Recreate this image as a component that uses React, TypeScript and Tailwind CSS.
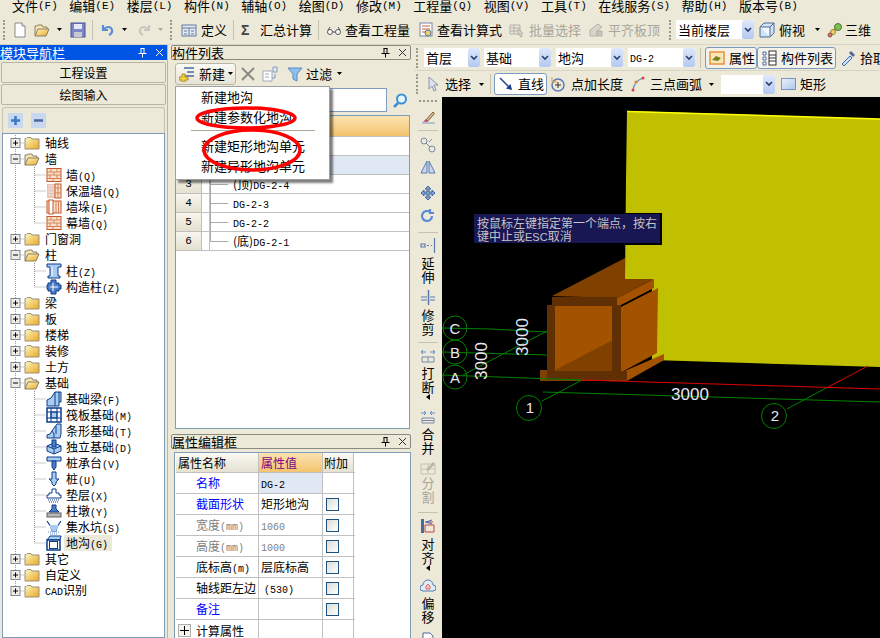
import { FC, ReactNode } from "react";

const L: FC<{ children: ReactNode }> = ({ children }) => (
  <span className="font-['Liberation_Mono',monospace] text-[10px]">{children}</span>
);

const Grip = () => <div className="w-0 h-[20px] border-l-2 border-dotted border-[#9a9a88] shrink-0" />;
const Sep = () => <div className="w-px h-[20px] bg-[#c5c2b0] shrink-0" />;
const Arrow: FC<{ gray?: boolean }> = ({ gray }) => (
  <svg width="5" height="3" viewBox="0 0 5 3" className="shrink-0">
    <path d="M0 0h5L2.500 3z" fill={gray ? "#aaa" : "#000"} />
  </svg>
);

const Folder: FC<{ open?: boolean }> = ({ open }) => (
  <svg width="16" height="14" viewBox="0 0 16 14" className="shrink-0">
    <defs>
      <linearGradient id="fold" x1="0" y1="0" x2="1" y2="1">
        <stop offset="0" stopColor="#fff6c8" />
        <stop offset="1" stopColor="#e8a820" />
      </linearGradient>
    </defs>
    {open ? (
      <>
        <path d="M1 13V3h2l1-1h4l1 2h4v2" fill="#f5e4b0" stroke="#8a8068" />
        <path d="M1 13l3-7h11l-3 7z" fill="url(#fold)" stroke="#8a8068" />
      </>
    ) : (
      <path d="M1 13V2.500h1l1-1h4l1 1.500h7v10z" fill="url(#fold)" stroke="#9a9078" />
    )}
  </svg>
);

const Bricks = () => (
  <>
    <rect x="1" y="1.500" width="14" height="13" fill="#f8e2cc" stroke="#c4562a" />
    <path d="M1 5h14M1 8h14M1 11.500h14M5 1.500V5M11 1.500V5M8 5v3M4 8v3.500M11 8v3.500M7 11.500v3" stroke="#d8805a" fill="none" />
  </>
);

const B = { fill: "#a8cdf0", stroke: "#0c3c8c" };

const icons: Record<string, ReactNode> = {
  wall: <Bricks />,
  insul: (
    <>
      <rect x="1" y="1" width="8" height="14" fill="#e8c4b8" />
      <path d="M2 3h6M2 6h6M2 9h6M2 12h6" stroke="#f4e4dc" />
      <rect x="9" y="1" width="6" height="14" fill="#f8e2cc" stroke="#c4562a" />
      <path d="M12 1v14M9 5h6M9 10h6" stroke="#d8805a" />
    </>
  ),
  pier: (
    <>
      <rect x="1" y="2" width="14" height="12" fill="#f8e2cc" stroke="#c4562a" />
      <rect x="3" y="1" width="4" height="14" fill="#fff" stroke="#c4562a" />
      <path d="M10 2v12M12.500 2v12" stroke="#d8805a" />
    </>
  ),
  col: (
    <>
      <path d="M1 1h14v3h-3v9h2v2H2v-2h2V4H1z" {...B} />
      <path d="M6 4v9" stroke="#fff" />
    </>
  ),
  gz: (
    <>
      <path d="M5 1h5v3h3v2h2v4h-2v2h-3v3H5v-3H2v-2H1V6h1V4h3z" fill="#4a7cc8" stroke="#0c3c8c" />
      <path d="M7 4v8M4 8h8" stroke="#fff" />
    </>
  ),
  jcl: <path d="M1 15V9l4-2 4-6h6v10h-2v4zM9 1v14M13 1v10" {...B} />,
  fb: (
    <>
      <rect x="1" y="1" width="14" height="14" fill="#fff" stroke="#0c3c8c" strokeWidth="1.500" />
      <rect x="5" y="5" width="6" height="6" fill="#a8cdf0" stroke="#0c3c8c" />
      <path d="M5 1v14M11 1v14M1 5h14M1 11h14" stroke="#0c3c8c" />
    </>
  ),
  tx: <path d="M1 15v-3l3-1 4-6 3-4h4v10l-1 4zM6 8l2 3v4M10 3v8" {...B} />,
  dl: (
    <>
      <path d="M1 7l7-3 7 3v5l-7 3-7-3z" {...B} />
      <path d="M1 7l7 3 7-3M8 10v5" fill="none" stroke="#0c3c8c" />
      <rect x="6" y="1" width="4" height="7" fill="#4a7cc8" stroke="#0c3c8c" />
    </>
  ),
  cap: (
    <>
      <path d="M1 2h14v4H1z" {...B} />
      <path d="M6 6h4v6l-2 3-2-3z" fill="#4a7cc8" stroke="#0c3c8c" />
    </>
  ),
  pile: <path d="M6 1h4v7h3l-3 3v2l-2 2-2-2v-2L3 8h3z" {...B} />,
  pad: (
    <>
      <path d="M6 2h4v4h3v2h2v3H1V8h2V6h3z" fill="#fff" stroke="#0c3c8c" />
      <path d="M2 13h12M3 15h10" stroke="#0c3c8c" strokeDasharray="1 1" />
    </>
  ),
  zd: (
    <>
      <path d="M6 2h4v4l3 3H3l3-3z" fill="#4a7cc8" stroke="#0c3c8c" />
      <rect x="1" y="10" width="14" height="4" fill="#b8b8b8" stroke="#606060" />
    </>
  ),
  pit: (
    <>
      <path d="M1 2l4 6h6l4-6M5 8l1 4h4l1-4" fill="none" stroke="#0c3c8c" strokeWidth="1.200" />
      <path d="M3 6h10l-3 6H6z" fill="#a8cdf0" />
      <path d="M2 13h12M4 15h8" stroke="#6a9ad0" strokeDasharray="1 1" />
    </>
  ),
  dg: (
    <>
      <path d="M1 5l3-4h11l-1 4z" {...B} />
      <path d="M1 5h13v10H1z" fill="#fff" stroke="#0c3c8c" strokeWidth="1.500" />
      <rect x="3.500" y="6.500" width="8" height="7" fill="#fff" stroke="#0c3c8c" />
    </>
  ),
};

const Ico: FC<{ name: string }> = ({ name }) => (
  <svg width="16" height="16" viewBox="0 0 16 16" className="shrink-0">
    {icons[name]}
  </svg>
);

type TreeRow = { label: string; key?: string; kind: "closed" | "open" | "child"; icon?: string; last?: boolean; end?: boolean; sel?: boolean };

const tree: TreeRow[] = [
  { label: "轴线", kind: "closed" },
  { label: "墙", kind: "open" },
  { label: "墙", key: "(Q)", kind: "child", icon: "wall" },
  { label: "保温墙", key: "(Q)", kind: "child", icon: "insul" },
  { label: "墙垛", key: "(E)", kind: "child", icon: "pier" },
  { label: "幕墙", key: "(Q)", kind: "child", icon: "wall", last: true },
  { label: "门窗洞", kind: "closed" },
  { label: "柱", kind: "open" },
  { label: "柱", key: "(Z)", kind: "child", icon: "col" },
  { label: "构造柱", key: "(Z)", kind: "child", icon: "gz", last: true },
  { label: "梁", kind: "closed" },
  { label: "板", kind: "closed" },
  { label: "楼梯", kind: "closed" },
  { label: "装修", kind: "closed" },
  { label: "土方", kind: "closed" },
  { label: "基础", kind: "open" },
  { label: "基础梁", key: "(F)", kind: "child", icon: "jcl" },
  { label: "筏板基础", key: "(M)", kind: "child", icon: "fb" },
  { label: "条形基础", key: "(T)", kind: "child", icon: "tx" },
  { label: "独立基础", key: "(D)", kind: "child", icon: "dl" },
  { label: "桩承台", key: "(V)", kind: "child", icon: "cap" },
  { label: "桩", key: "(U)", kind: "child", icon: "pile" },
  { label: "垫层", key: "(X)", kind: "child", icon: "pad" },
  { label: "柱墩", key: "(Y)", kind: "child", icon: "zd" },
  { label: "集水坑", key: "(S)", kind: "child", icon: "pit" },
  { label: "地沟", key: "(G)", kind: "child", icon: "dg", last: true, sel: true },
  { label: "其它", kind: "closed" },
  { label: "自定义", kind: "closed" },
  { label: "CAD识别", kind: "closed", end: true },
];

const Expander: FC<{ open: boolean; end?: boolean }> = ({ open, end }) => (
  <svg width="24" height="16" viewBox="0 0 24 16" className="shrink-0">
    <path d={end ? "M15.500 0V8M15.500 8H24" : "M15.500 0V16M15.500 8H24"} stroke="#999" strokeDasharray="1 1" fill="none" />
    <rect x="11" y="3.500" width="9" height="9" fill="#f0eee4" stroke="#7f8a98" />
    <path d={open ? "M13 8h5" : "M13 8h5M15.500 5.500v5"} stroke="#000" />
  </svg>
);

const ChildGuide: FC<{ last?: boolean }> = ({ last }) => (
  <svg width="46" height="16" viewBox="0 0 46 16" className="shrink-0">
    <path d="M15.500 0V16" stroke="#999" strokeDasharray="1 1" />
    <path d={last ? "M34.500 0V8H46" : "M34.500 0V16M34.500 8H46"} stroke="#999" strokeDasharray="1 1" fill="none" />
  </svg>
);

const Tree = () => (
  <div className="flex-1 bg-white border border-[#7f9db9] pt-[1px] text-[12px] leading-[16px] overflow-hidden">
    {tree.map((r, i) => (
      <div key={i} className="flex items-center h-[16px] -ml-[3px]">
        {r.kind === "child" ? (
          <>
            <ChildGuide last={r.last} />
            <Ico name={r.icon!} />
            <span className={`ml-[2px] pl-[2px] pr-[4px] h-[16px] ${r.sel ? "bg-[#ece9d8]" : ""}`}>
              {r.label}
              <L>{r.key}</L>
            </span>
          </>
        ) : (
          <>
            <Expander open={r.kind === "open"} end={r.end} />
            <Folder open={r.kind === "open"} />
            <span className="ml-[5px]">
              {r.label === "CAD识别" ? (
                <>
                  <L>CAD</L>识别
                </>
              ) : (
                r.label
              )}
            </span>
          </>
        )}
      </div>
    ))}
  </div>
);

const PinClose: FC<{ white?: boolean }> = ({ white }) => {
  const c = white ? "#fff" : "#000";
  return (
    <div className="ml-auto flex items-center gap-[8px] pr-[3px]">
      <svg width="9" height="10" viewBox="0 0 9 10">
        <path d="M2.500 0.500h4M3 0.500v5M6 0.500v5M0.500 5.500h8M4.500 5.500v4" stroke={c} fill="none" />
      </svg>
      <svg width="9" height="9" viewBox="0 0 9 9">
        <path d="M1 1l7 7M8 1l-7 7" stroke={white ? "#fff" : "#333"} fill="none" />
      </svg>
    </div>
  );
};

const Combo: FC<{ w: string; children?: ReactNode }> = ({ w, children }) => (
  <div className={`${w} h-[19px] bg-white flex items-center pl-[2px] text-[13px] leading-[19px] shrink-0`}>
    <span className="truncate">{children}</span>
    <div className="ml-auto w-[12px] h-[19px] bg-gradient-to-b from-[#dfe8fb] to-[#b4c8f0] flex items-center justify-center rounded-[2px] shrink-0">
      <svg width="8" height="6" viewBox="0 0 8 6">
        <path d="M1 1l3 3 3-3" stroke="#27406e" strokeWidth="1.600" fill="none" />
      </svg>
    </div>
  </div>
);

const Menu = () => (
  <div className="h-[15px] flex items-start pl-[12px] gap-[11.500px] text-[13px] leading-[12px] overflow-hidden shrink-0">
    {[
      ["文件", "(F)"],
      ["编辑", "(E)"],
      ["楼层", "(L)"],
      ["构件", "(N)"],
      ["辅轴", "(O)"],
      ["绘图", "(D)"],
      ["修改", "(M)"],
      ["工程量", "(Q)"],
      ["视图", "(V)"],
      ["工具", "(T)"],
      ["在线服务", "(S)"],
      ["帮助", "(H)"],
      ["版本号", "(B)"],
    ].map(([a, b]) => (
      <div key={a} className="flex whitespace-nowrap">
        <div>{a}</div>
        <div className="font-['Liberation_Mono',monospace] text-[11px]">{b}</div>
      </div>
    ))}
  </div>
);

const Svg16: FC<{ children: ReactNode }> = ({ children }) => (
  <svg width="16" height="16" viewBox="0 0 16 16" className="shrink-0">
    {children}
  </svg>
);

const TopBar = () => (
  <div className="h-[30px] flex items-center pl-[3px] text-[13px] leading-[16px] border-b border-[#d8d5c4] whitespace-nowrap overflow-hidden shrink-0">
    <Grip />
    <div className="ml-[7px]">
      <Svg16>
        <path d="M3 1h7l3 3v11H3z" fill="#fff" stroke="#8a8a8a" />
        <path d="M10 1v3h3" fill="#eee" stroke="#8a8a8a" />
      </Svg16>
    </div>
    <div className="ml-[6px]">
      <Folder open />
    </div>
    <div className="ml-[7px]"><Arrow /></div>
    <div className="ml-[8px]">
      <Svg16>
        <rect x="1" y="1" width="14" height="14" fill="#7a86c8" stroke="#4a5098" />
        <rect x="4" y="2" width="8" height="5" fill="#e8e8f4" />
        <rect x="4" y="10" width="8" height="5" fill="#c8c8d0" />
      </Svg16>
    </div>
    <div className="ml-[6px]"><Sep /></div>
    <div className="ml-[7px]">
      <Svg16>
        <path d="M3 3v5h5M3.500 8C6 4 11 4 12 8c.5 2-1 4-3 5" stroke="#5a8ad8" strokeWidth="2.200" fill="none" />
      </Svg16>
    </div>
    <div className="ml-[6px]"><Arrow /></div>
    <div className="ml-[9px]">
      <Svg16>
        <path d="M13 3v5H8M12.500 8C10 4 5 4 4 8c-.5 2 1 4 3 5" stroke="#c8c8c0" strokeWidth="2.200" fill="none" />
      </Svg16>
    </div>
    <div className="ml-[6px]"><Arrow gray /></div>
    <div className="ml-[7px]"><Grip /></div>
    <div className="ml-[9px]">
      <Svg16>
        <rect x="1" y="3" width="14" height="11" fill="#dfe8f6" stroke="#6a7a98" />
        <path d="M1 6h14M8 6v8M3 9h3M10 9h3M3 12h3M10 12h3" stroke="#6a7a98" />
      </Svg16>
    </div>
    <span className="ml-[4px]">定义</span>
    <div className="ml-[6px]"><Sep /></div>
    <span className="ml-[7px] w-[12px] font-['Liberation_Sans',sans-serif] font-bold text-[#444] text-[14px]">Σ</span>
    <span className="ml-[7px]">汇总计算</span>
    <div className="ml-[6px]"><Sep /></div>
    <div className="ml-[7px]">
      <Svg16>
        <circle cx="4" cy="10" r="2.500" fill="#fff" stroke="#555" />
        <circle cx="12" cy="10" r="2.500" fill="#fff" stroke="#555" />
        <path d="M6.500 10h3M2 8l2-3M14 8l-2-3" stroke="#555" fill="none" />
      </Svg16>
    </div>
    <span className="ml-[3px]">查看工程量</span>
    <div className="ml-[8px]">
      <Svg16>
        <rect x="2" y="1" width="12" height="13" fill="#fff" stroke="#7a86a8" />
        <path d="M4 4h8M4 7h8M4 10h4" stroke="#c06040" />
        <circle cx="10" cy="11" r="3" fill="#e8d070" stroke="#5a7a98" />
      </Svg16>
    </div>
    <span className="ml-[3px]">查看计算式</span>
    <div className="ml-[7px]">
      <Svg16>
        <path d="M1 3h10v9H1zM1 6h10M1 9h10M5 3v9" fill="#e8e6da" stroke="#b4b2a6" />
        <path d="M9 7l5 4-2 .5 1 3-1.500.5-1-3-1.500 1z" fill="#d8d6ca" stroke="#b4b2a6" />
      </Svg16>
    </div>
    <span className="ml-[4px] text-[#a8a69a]">批量选择</span>
    <div className="ml-[7px]">
      <Svg16>
        <path d="M2 8l8-6 4 3-5 4v5H2z" fill="#d8d6ca" stroke="#b4b2a6" />
        <path d="M9 9h5v5H9z" fill="#c8c6ba" stroke="#b4b2a6" />
      </Svg16>
    </div>
    <span className="ml-[4px] text-[#a8a69a]">平齐板顶</span>
    <div className="ml-[9px]"><Grip /></div>
    <div className="ml-[5px]">
      <Combo w="w-[78px]">当前楼层</Combo>
    </div>
    <div className="ml-[5px]">
      <Svg16>
        <path d="M1 5l4-4h10v10l-4 4H1z" fill="#cfe2f6" stroke="#4a6a98" />
        <path d="M1 5h10v10M11 5l4-4" fill="#f4f8fc" stroke="#4a6a98" />
      </Svg16>
    </div>
    <span className="ml-[4px]">俯视</span>
    <div className="ml-[10px]"><Arrow /></div>
    <div className="ml-[7px]">
      <Svg16>
        <path d="M2 14l5-6 6-5" stroke="#7a9a50" strokeWidth="2" fill="none" />
        <circle cx="11" cy="5" r="3.500" fill="#80c050" stroke="#4a7a30" />
        <circle cx="6" cy="10" r="2.500" fill="#f0d070" stroke="#a08030" />
        <circle cx="3" cy="13" r="2" fill="#d07070" stroke="#905050" />
      </Svg16>
    </div>
    <span className="ml-[2px]">三维</span>
  </div>
);

const LeftPanel = () => (
  <div className="w-[168px] flex flex-col shrink-0 border-r border-[#b8b6a8]">
    <div className="h-[15px] bg-[#0055e5] text-white text-[13px] leading-[15px] flex items-center shrink-0">
      模块导航栏
      <PinClose white />
    </div>
    <div className="mt-[2px] h-[21px] mx-px border border-[#b8b6a4] rounded-[2px] text-[12px] leading-[19px] text-center shrink-0">工程设置</div>
    <div className="mt-px h-[21px] mx-px border border-[#b8b6a4] rounded-[2px] text-[12px] leading-[19px] text-center shrink-0">绘图输入</div>
    <div className="mt-[2px] h-[26px] mx-[2px] border border-b-0 border-[#c4c2b0] rounded-t-[3px] flex items-center gap-[8px] pl-[5px] shrink-0">
      <div className="w-[15px] h-[15px] bg-[#c8d8f0] flex items-center justify-center">
        <svg width="9" height="9" viewBox="0 0 9 9"><path d="M0 4.500h9M4.500 0v9" stroke="#3a78c8" strokeWidth="2.500" /></svg>
      </div>
      <div className="w-[15px] h-[15px] bg-[#c8d8f0] flex items-center justify-center">
        <svg width="9" height="9" viewBox="0 0 9 9"><path d="M0 4.500h9" stroke="#4a6a98" strokeWidth="2.500" /></svg>
      </div>
    </div>
    <div className="flex-1 mx-[2px] min-h-0 flex flex-col">
      <Tree />
    </div>
  </div>
);

const numCell = "w-[26px] shrink-0 bg-gradient-to-b from-[#f8f6ee] to-[#e4e1d0] border-r border-[#c0c0c0] text-center font-['Liberation_Mono',monospace] text-[11px]";

const ListRow: FC<{ n: number; guide?: "mid" | "last"; text?: ReactNode; selected?: boolean }> = ({ n, guide, text, selected }) => (
  <div className={`h-[19px] flex border-b border-[#c0c0c0] leading-[18px] ${selected ? "bg-[#e0e8f4]" : ""}`}>
    <div className={numCell}>{n}</div>
    <div className="w-[8px] border-r border-[#c0c0c0] shrink-0" />
    {guide && (
      <svg width="18" height="19" viewBox="0 0 18 19" className="shrink-0">
        <path d={guide === "last" ? "M0.500 0V9.500H18" : "M0.500 0V19M0.500 9.500H18"} stroke="#aaa" fill="none" />
      </svg>
    )}
    <span className="ml-[5px] text-[12px] whitespace-nowrap">{text}</span>
  </div>
);

const PanelHead: FC<{ title: string }> = ({ title }) => (
  <div className="h-[15px] mx-[2px] border border-[#8a8a80] rounded-[2px] text-[13px] leading-[13px] flex items-center shrink-0">
    {title}
    <PinClose />
  </div>
);

type Prop = { name: ReactNode; color: string; value?: ReactNode; check: boolean; sel?: boolean };

const props: Prop[] = [
  { name: "名称", color: "text-[#0000ff]", value: <L>DG-2</L>, check: false, sel: true },
  { name: "截面形状", color: "text-[#0000ff]", value: "矩形地沟", check: true },
  { name: <>宽度<L>(mm)</L></>, color: "text-[#808080]", value: <span className="text-[#808080]"><L>1060</L></span>, check: true },
  { name: <>高度<L>(mm)</L></>, color: "text-[#808080]", value: <span className="text-[#808080]"><L>1000</L></span>, check: true },
  { name: <>底标高<L>(m)</L></>, color: "text-black", value: "层底标高", check: true },
  { name: "轴线距左边", color: "text-black", value: <span className="ml-[3px]"><L>(530)</L></span>, check: true },
  { name: "备注", color: "text-[#0000ff]", check: true },
];

const PropGrid = () => (
  <div className="flex-1 mt-[3px] ml-[5px] mr-[2px] bg-white border border-b-0 border-[#7f9db9] pl-px text-[12px] leading-[20px] overflow-hidden">
    <div className="flex h-[20px] w-[179px] border-b border-[#c0c0c0]">
      <div className="w-[83px] pl-[2px] bg-gradient-to-b from-[#fbfaf4] to-[#e4e1d0] border-r border-[#c0c0c0]">属性名称</div>
      <div className="w-[64px] pl-[2px] bg-gradient-to-b from-[#fbe3b0] to-[#f3c36e] text-[#800080] border-r border-[#c0c0c0]">属性值</div>
      <div className="w-[31px] pl-[1px] bg-gradient-to-b from-[#fbfaf4] to-[#e4e1d0] border-r border-[#c0c0c0]">附加</div>
    </div>
    {props.map((p, i) => (
      <div key={i} className="flex h-[21px] w-[179px] border-b border-[#c0c0c0]">
        <div className={`w-[83px] pl-[20px] border-r border-[#c0c0c0] whitespace-nowrap ${p.color}`}>{p.name}</div>
        <div className={`w-[64px] pl-[2px] border-r border-[#c0c0c0] ${p.sel ? "bg-[#e0e8f4]" : ""}`}>{p.value}</div>
        <div className="w-[31px] pl-[3px] pt-[4px] border-r border-[#c0c0c0]">
          {p.check && <div className="w-[13px] h-[13px] border border-[#1c5180] bg-gradient-to-br from-[#dcdcd4] to-white" />}
        </div>
      </div>
    ))}
    <div className="flex h-[21px] w-[179px]">
      <div className="w-[83px] pl-[2px] border-r border-[#c0c0c0] flex items-center">
        <div className="w-[13px] h-[13px] border border-[#b0b0b0] bg-[#f4f4ec] flex items-center justify-center shrink-0">
          <svg width="9" height="9" viewBox="0 0 9 9"><path d="M0 4.500h9M4.500 0v9" stroke="#000" /></svg>
        </div>
        <span className="ml-[5px] whitespace-nowrap">计算属性</span>
      </div>
      <div className="w-[64px] border-r border-[#c0c0c0]" />
      <div className="w-[31px] border-r border-[#c0c0c0]" />
    </div>
  </div>
);

const MiddlePanel = () => (
  <div className="relative w-[244px] ml-[1px] flex flex-col shrink-0">
    <PanelHead title="构件列表" />
    <div className="h-[27px] flex items-center pl-[6px] text-[13px] leading-[16px] shrink-0">
      <div className="w-[61px] h-[22px] border border-[#b8b6a4] rounded-[3px] bg-gradient-to-b from-[#fbfaf4] to-[#e6e3d4] flex items-center pl-[3px] shrink-0">
        <Svg16>
          <path d="M5 2h10M8 6h7M5 10h10" stroke="#4a6aa8" strokeWidth="1.500" />
          <path d="M3 8h3v3h3v3H6v2H3v-2H0v-3h3z" fill="#f0d040" stroke="#b09020" />
        </Svg16>
        <span className="ml-[4px]">新建</span>
        <div className="ml-[3px]"><Arrow /></div>
      </div>
      <svg width="14" height="14" viewBox="0 0 14 14" className="ml-[5px] shrink-0">
        <path d="M1 1l12 12M13 1L1 13" stroke="#8a8a84" strokeWidth="2" />
      </svg>
      <div className="ml-[7px]">
        <Svg16>
          <path d="M1 5h9v10H1z" fill="#fff" stroke="#a0a8b8" />
          <path d="M3 8h4M3 11h4" stroke="#a0a8b8" />
          <path d="M11 1h4v5h-4zM13 8v4h-3" fill="none" stroke="#7a9ad0" />
        </Svg16>
      </div>
      <div className="ml-[9px]">
        <Svg16>
          <path d="M1 2h14l-5 6v7l-4-2V8z" fill="#8cc0f0" stroke="#5a8ac0" />
        </Svg16>
      </div>
      <span className="ml-[3px]">过滤</span>
      <div className="ml-[5px]"><Arrow /></div>
    </div>
    <div className="h-[24px] ml-[6px] mr-[3px] flex items-center shrink-0 mt-[1px]">
      <div className="w-[212px] h-[24px] bg-white border border-[#7f9db9]" />
      <svg width="17" height="17" viewBox="0 0 17 17" className="ml-[5px] shrink-0">
        <circle cx="9.500" cy="7" r="4.500" fill="#e8f4fc" stroke="#3a90d8" strokeWidth="2" />
        <path d="M6 11l-4 4" stroke="#3a90d8" strokeWidth="2.500" />
      </svg>
    </div>
    <div className="h-[314px] mt-[3px] ml-[6px] mr-[3px] bg-white border border-[#7f9db9] shrink-0">
      <div className="h-[21px] border-b border-[#c0c0c0] bg-gradient-to-b from-[#fbe3b0] to-[#f3c36e]" />
      <ListRow n={1} />
      <ListRow n={2} selected />
      <ListRow n={3} guide="mid" text={<>(顶)<L>DG-2-4</L></>} />
      <ListRow n={4} guide="mid" text={<L>DG-2-3</L>} />
      <ListRow n={5} guide="mid" text={<L>DG-2-2</L>} />
      <ListRow n={6} guide="last" text={<>(底)<L>DG-2-1</L></>} />
    </div>
    <div className="mt-[5px] shrink-0"><PanelHead title="属性编辑框" /></div>
    <PropGrid />
    <div className="absolute left-[6px] top-[41px] w-[155px] h-[94px] bg-white border border-[#a0a0a0] shadow-[3px_3px_2px_rgba(0,0,0,0.5)] text-[13px] leading-[20px] pl-[25px] z-10">
      <div>新建地沟</div>
      <div>新建参数化地沟</div>
      <div className="h-px bg-[#aca899] -ml-[10px] mr-[14px] mt-[3px] mb-[5px]" />
      <div>新建矩形地沟单元</div>
      <div>新建异形地沟单元</div>
    </div>
    <svg width="240" height="120" viewBox="0 0 240 120" className="absolute left-0 top-[40px] z-20 pointer-events-none">
      <ellipse cx="77" cy="33" rx="49" ry="10" fill="none" stroke="#f00" strokeWidth="3.500" />
      <ellipse cx="83" cy="65" rx="48" ry="20" fill="none" stroke="#f00" strokeWidth="3.500" />
    </svg>
  </div>
);

const RowTwo = () => (
  <div className="h-[26px] flex items-center pl-[2px] text-[13px] leading-[16px] border-b border-[#d8d5c4] whitespace-nowrap overflow-hidden shrink-0">
    <Grip />
    <div className="ml-[6px]"><Combo w="w-[56px]">首层</Combo></div>
    <div className="ml-[4px]"><Combo w="w-[67px]">基础</Combo></div>
    <div className="ml-[5px]"><Combo w="w-[67px]">地沟</Combo></div>
    <div className="ml-[5px]"><Combo w="w-[67px]"><L>DG-2</L></Combo></div>
    <div className="ml-[5px]"><Sep /></div>
    <div className="ml-[4px] w-[52px] h-[22px] border border-[#7a9ac0] rounded-[3px] flex items-center pl-[3px] bg-[#f4f2e8] shrink-0">
      <Svg16>
        <rect x="1" y="2" width="14" height="12" fill="#f8e8b8" stroke="#e89040" strokeWidth="1.500" />
        <path d="M3 10l4-4 5 2-3 3z" fill="#7a8020" />
      </Svg16>
      <span className="ml-[4px]">属性</span>
    </div>
    <div className="w-[79px] h-[22px] border border-[#7a9ac0] rounded-[3px] flex items-center pl-[3px] bg-[#f4f2e8] shrink-0">
      <Svg16>
        <path d="M2 2h3v3H2zM2 7h3v3H2zM2 12h3v3H2z" fill="#fff" stroke="#4a6aa8" />
        <rect x="8" y="1" width="7" height="14" fill="#fff" stroke="#333" />
        <path d="M8 5h7M8 8h7M8 11h7" stroke="#333" />
      </Svg16>
      <span className="ml-[4px]">构件列表</span>
    </div>
    <div className="ml-[4px]">
      <Svg16>
        <path d="M2 14l8-8 2 2-8 8z" fill="#cfe0f6" stroke="#3a6aa8" />
        <path d="M9 3l2-2 4 4-2 2z" fill="#4a6a98" />
      </Svg16>
    </div>
    <span className="ml-[4px]">拾取</span>
  </div>
);

const RowThree = () => (
  <div className="h-[26px] flex items-center pl-[2px] text-[13px] leading-[16px] whitespace-nowrap overflow-hidden shrink-0">
    <Grip />
    <div className="ml-[10px]">
      <svg width="10" height="16" viewBox="0 0 10 16" className="shrink-0">
        <path d="M1 1v12l3-3 2 5 2-1-2-5h4z" fill="#dde4f0" stroke="#8a94a8" />
      </svg>
    </div>
    <span className="ml-[7px]">选择</span>
    <div className="ml-[8px]"><Arrow /></div>
    <div className="ml-[6px]"><Sep /></div>
    <div className="ml-[3px] w-[53px] h-[22px] border border-[#7a9ac0] rounded-[3px] bg-white flex items-center pl-[3px] shrink-0">
      <Svg16>
        <path d="M2 2l11 11" stroke="#1c3c8c" strokeWidth="1.500" />
        <path d="M14 14l-6-1.500 4.500-4.500z" fill="#1c3c8c" />
      </Svg16>
      <span className="ml-[4px]">直线</span>
    </div>
    <div className="ml-[3px]">
      <Svg16>
        <circle cx="8" cy="9" r="6" fill="none" stroke="#5a7ac0" strokeWidth="1.500" />
        <path d="M5 9h6M8 6v6" stroke="#333" />
        <path d="M2 1v5h5" fill="none" stroke="#e0a030" />
      </Svg16>
    </div>
    <span className="ml-[5px]">点加长度</span>
    <div className="ml-[8px]">
      <svg width="14" height="16" viewBox="0 0 14 16" className="shrink-0">
        <path d="M2 14C3 8 6 4 12 2" fill="none" stroke="#5a8ac0" strokeWidth="1.200" />
        <circle cx="2" cy="14" r="1.500" fill="#e04040" />
        <circle cx="5" cy="6" r="1.500" fill="#e08040" />
        <circle cx="12" cy="2" r="1.500" fill="#e04040" />
      </svg>
    </div>
    <span className="ml-[5px]">三点画弧</span>
    <div className="ml-[7px]"><Arrow /></div>
    <div className="ml-[7px]"><Combo w="w-[54px]" /></div>
    <div className="ml-[6px] w-[15px] h-[12px] border border-[#7a94c0] bg-gradient-to-br from-[#e8f0fc] to-[#b0c8ec] shrink-0" />
    <span className="ml-[4px]">矩形</span>
  </div>
);

const VItem: FC<{ chars?: string[]; gray?: boolean; caret?: boolean; mt: string; gap?: string; children: ReactNode }> = ({ chars, gray, caret, mt, gap, children }) => (
  <div className={`${mt} flex flex-col items-center shrink-0 text-[13px] ${gray ? "text-[#a8a69a]" : ""}`}>
    {children}
    {chars && (
      <div className={`${gap ?? "mt-[2px]"} flex flex-col items-center`}>
        {chars.map((c) => (
          <div key={c} className="h-[14px] leading-[14px]">{c}</div>
        ))}
      </div>
    )}
    {caret && (
      <svg width="4" height="6" viewBox="0 0 4 6" className="shrink-0">
        <path d="M4 0v6L0 3z" fill="#000" />
      </svg>
    )}
  </div>
);

const VSep: FC<{ mt: string }> = ({ mt }) => <div className={`${mt} h-px w-[20px] bg-[#c5c2b0] mx-auto shrink-0`} />;

const SideBar = () => (
  <div className="w-[28px] flex flex-col pt-[3px] overflow-hidden shrink-0">
    <div className="h-0 w-[18px] mx-auto border-t-2 border-dotted border-[#9a9a88] shrink-0" />
    <VItem mt="mt-[7px]">
      <Svg16>
        <path d="M2 14h13" stroke="#7a9ac0" />
        <path d="M5 12l8-9 1.500 1.500-7 8z" fill="#d8c090" stroke="#806040" />
        <path d="M3 13l3-3 2 2z" fill="#c04080" />
      </Svg16>
    </VItem>
    <VSep mt="mt-[5px]" />
    <VItem mt="mt-[6px]">
      <Svg16>
        <circle cx="4" cy="4" r="3" fill="none" stroke="#7a8aa8" />
        <path d="M6 6l4 4M12 2L9 5" stroke="#7a8aa8" />
        <circle cx="12" cy="12" r="3" fill="none" stroke="#7a8aa8" />
      </Svg16>
    </VItem>
    <VItem mt="mt-[6px]">
      <Svg16>
        <path d="M7 2v12L1 14zM9 2v12l6 0z" fill="#c8d8f0" stroke="#5a7ab0" />
      </Svg16>
    </VItem>
    <VItem mt="mt-[10px]">
      <Svg16>
        <path d="M8 1l3 3H9v3h3V5l3 3-3 3V9H9v3h2l-3 3-3-3h2V9H4v2L1 8l3-3v2h3V4H5z" fill="#7aa0d8" stroke="#4a6a98" />
      </Svg16>
    </VItem>
    <VItem mt="mt-[7px]">
      <Svg16>
        <path d="M12 8a5 5 0 1 1-2-4M10 1v4h4" fill="none" stroke="#5a8ad8" strokeWidth="2.200" />
      </Svg16>
    </VItem>
    <VSep mt="mt-[8px]" />
    <VItem mt="mt-[5px]" chars={["延", "伸"]}>
      <Svg16>
        <path d="M1 6h4v3H1zM7 7.500h2M11 7.500h1M14.500 0v15" stroke="#5a7ab0" fill="none" strokeWidth="1.200" />
      </Svg16>
    </VItem>
    <VItem mt="mt-[6px]" chars={["修", "剪"]}>
      <Svg16>
        <path d="M1 7h6M10 7h5M1 10h6M10 10h5" stroke="#5a7ab0" />
        <path d="M8.500 0v15" stroke="#5a7ab0" strokeWidth="1.500" />
      </Svg16>
    </VItem>
    <VSep mt="mt-[6px]" />
    <VItem mt="mt-[5px]" chars={["打", "断"]} caret>
      <Svg16>
        <path d="M1 4h5M10 4h5M3 2L1 4l2 2M13 2l2 2-2 2" stroke="#5a8ad8" fill="none" />
        <path d="M2 9h12v5H2zM8 9v5" fill="none" stroke="#7a8aa8" />
      </Svg16>
    </VItem>
    <VItem mt="mt-[9px]" chars={["合", "并"]}>
      <Svg16>
        <path d="M1 4h5M10 4h5M4 2l2 2-2 2M12 2l-2 2 2 2" stroke="#5a8ad8" fill="none" />
        <path d="M2 9h12v5H2zM2 11.500h12" fill="none" stroke="#7a8aa8" />
      </Svg16>
    </VItem>
    <VItem mt="mt-[5px]" chars={["分", "割"]} gap="mt-0" gray>
      <Svg16>
        <path d="M1 4h14v10H1zM1 9h14M8 4v10" fill="none" stroke="#c4c2b4" />
        <path d="M6 10l7-8 2 2-7 7z" fill="#b8b6aa" />
      </Svg16>
    </VItem>
    <VSep mt="mt-[8px]" />
    <VItem mt="mt-[5px]" chars={["对", "齐"]} gap="mt-[3px]" caret>
      <Svg16>
        <rect x="1" y="1" width="3" height="14" fill="#4a6a98" />
        <path d="M5 4h8M5 7h9v7H5z" fill="none" stroke="#c04040" />
        <path d="M12 2L6 4l6 2" fill="none" stroke="#4a6ac8" />
      </Svg16>
    </VItem>
    <VItem mt="mt-[7px]" chars={["偏", "移"]}>
      <Svg16>
        <path d="M3 13a3 3 0 0 1 0-6 5 5 0 0 1 10 0 3 3 0 0 1 0 6z" fill="#e0ecf8" stroke="#5a7ab0" />
        <path d="M6 11V8l2-2 2 2v3z" fill="#f8c0b8" stroke="#d87060" />
      </Svg16>
    </VItem>
    <VItem mt="mt-[8px]">
      <Svg16>
        <path d="M3 1h7l3 3v12H3z" fill="#fff" stroke="#4a6a98" />
      </Svg16>
    </VItem>
  </div>
);

const Canvas = () => (
  <div className="relative flex-1 bg-black overflow-hidden">
    <svg viewBox="442 97 438 541" className="w-full h-full block">
      <path d="M627 111L880 119V367L652 360V280H625L626 180Z" fill="#c0c000" />
      <path d="M627 111.500L880 119" stroke="#ffff00" strokeWidth="1.500" />

      <path d="M552 296L625 258V279H654L617 298Z" fill="#7f4000" />
      <path d="M617 298L654 279V288L617 307Z" fill="#a35200" />
      <path d="M621 307L658 288L657 353L620 373Z" fill="#a35200" />
      <path d="M620 373L664 354V360L627 381Z" fill="#a35200" />
      <rect x="555" y="305" width="58" height="66" fill="#a35200" />
      <path d="M555 370L613 340V372H555Z" fill="#7f4000" />
      <rect x="547" y="305" width="8" height="70" fill="#602f04" />
      <rect x="552" y="297" width="65" height="9" fill="#602f04" />
      <rect x="612" y="305" width="9" height="70" fill="#602f04" />
      <path d="M540 370H547V371H627V381H540Z" fill="#7f4000" />
      <rect x="547" y="371" width="80" height="9" fill="#602f04" />

      <g fill="none" stroke="#008000">
        <path d="M442 328L490 329L547 332" />
        <path d="M442 352L547 355" />
        <path d="M442 375L582 380" />
        <path d="M463 375L547 331" />
        <path d="M543 392L880 402" />
        <path d="M542 401L582 380" />
        <path d="M787 409L828 387" />
        <circle cx="455" cy="328" r="12" />
        <circle cx="455" cy="352" r="12" />
        <circle cx="455" cy="377" r="12" />
        <circle cx="529" cy="408" r="12.500" />
        <circle cx="774" cy="416" r="12.500" />
      </g>
      <path d="M582 380L880 389M828 387L868 366" fill="none" stroke="#e00000" />

      <g fill="#e8e8f4" fontFamily="Liberation Sans, sans-serif" fontSize="15" textAnchor="middle">
        <text x="455" y="334">C</text>
        <text x="455" y="358">B</text>
        <text x="455" y="383">A</text>
        <text x="530" y="413">1</text>
        <text x="775" y="421">2</text>
        <text x="690" y="400" fontSize="17">3000</text>
        <text x="0" y="0" fontSize="17" transform="translate(487 361) rotate(-90)">3000</text>
        <text x="0" y="0" fontSize="17" transform="translate(528 337) rotate(-90)">3000</text>
      </g>
    </svg>
    <div className="absolute left-[31px] top-[116px] w-[189px] h-[32px] bg-[#191654] border-r-2 border-b-2 border-t border-l border-black text-[#c4c4c4] text-[12px] leading-[13px] pl-[3px] pt-[2px]">
      按鼠标左键指定第一个端点，按右
      <br />
      键中止或<span className="font-['Liberation_Sans',sans-serif] text-[11px]">ESC</span>取消
    </div>
  </div>
);

const App: FC = () => (
  <div className="w-[880px] h-[638px] bg-[#ece9d8] text-black overflow-hidden flex flex-col font-['Noto_Sans_CJK_SC',sans-serif]">
    <Menu />
    <TopBar />
    <div className="flex-1 flex min-h-0">
      <LeftPanel />
      <MiddlePanel />
      <div className="flex-1 flex flex-col min-w-0 ml-px">
        <RowTwo />
        <RowThree />
        <div className="flex-1 flex min-h-0">
          <SideBar />
          <Canvas />
        </div>
      </div>
    </div>
  </div>
);

export default App;
